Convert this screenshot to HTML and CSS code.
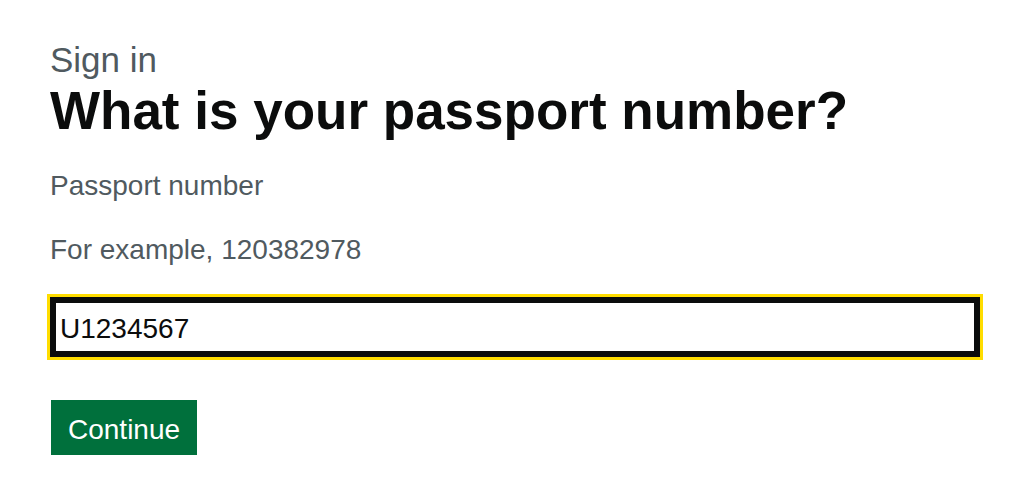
FILE: index.html
```html
<!DOCTYPE html>
<html lang="en">
<head>
<meta charset="utf-8">
<title>Sign in – What is your passport number?</title>
<link rel="stylesheet" href="styles.css">
</head>
<body>
<main class="page">
  <form class="form" action="#" method="post">
    <span class="caption">Sign in</span>
    <h1 class="heading">What is your passport number?</h1>
    <label class="label" for="passport">Passport number</label>
    <div class="hint">For example, 120382978</div>
    <input class="input input--focus" id="passport" name="passport" type="text" value="U1234567" spellcheck="false">
    <button class="button" type="submit">Continue</button>
  </form>
</main>
</body>
</html>
```

FILE: styles.css
```css
html, body {
  margin: 0;
  padding: 0;
  background: #ffffff;
}

body {
  font-family: "Liberation Sans", Arial, Helvetica, sans-serif;
  color: #0b0c0c;
}

.page {
  padding: 40px 44px 0 50px;
}

.form {
  display: flex;
  flex-direction: column;
  align-items: flex-start;
}

.caption {
  display: block;
  font-size: 35px;
  line-height: 40px;
  color: #505a5f;
}

.heading {
  margin: 0 0 28px;
  font-size: 53px;
  line-height: 62px;
  font-weight: 700;
  color: #0b0c0c;
}

.label {
  display: block;
  margin-bottom: 32px;
  font-size: 28px;
  line-height: 32px;
  color: #505a5f;
}

.hint {
  margin-bottom: 31px;
  font-size: 28px;
  line-height: 32px;
  color: #505a5f;
}

.input {
  box-sizing: border-box;
  width: 100%;
  height: 60px;
  margin: 0 0 43px;
  padding: 4px 7px 0;
  font-family: inherit;
  font-size: 28px;
  color: #0b0c0c;
  background: #ffffff;
  border: 3px solid #0b0c0c;
  border-radius: 0;
  appearance: none;
}

/* focused state: thick black edge plus yellow ring */
.input--focus {
  outline: 3px solid #ffdd00;
  outline-offset: 0;
  box-shadow: inset 0 0 0 3px #0b0c0c;
}

.button {
  margin: 0 0 0 1px;
  padding: 14px 17px 10px;
  font-family: inherit;
  font-size: 28px;
  line-height: 31px;
  color: #ffffff;
  background: #00703c;
  border: 0;
  border-radius: 0;
  box-shadow: 0 3px 0 #002d18;
  cursor: pointer;
}
```
